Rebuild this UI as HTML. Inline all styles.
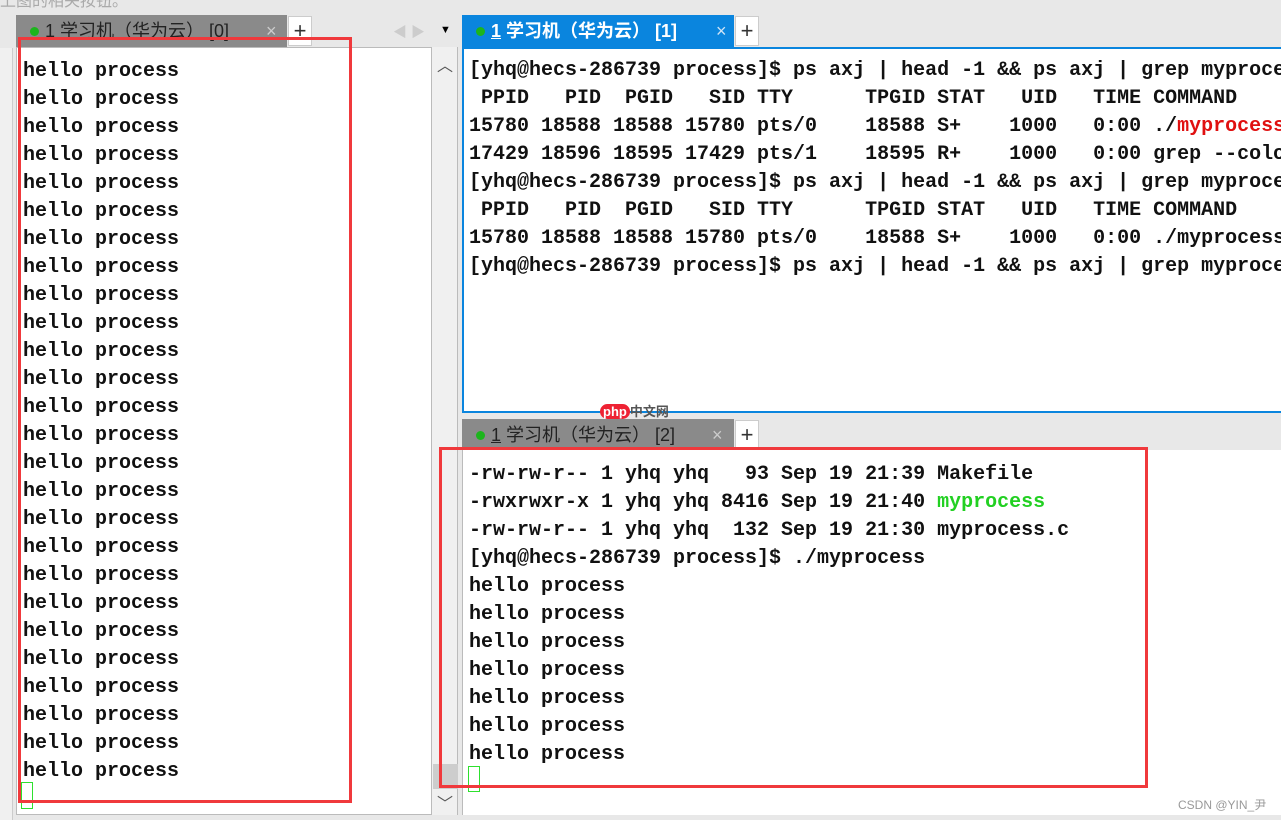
<!DOCTYPE html>
<html><head><meta charset="utf-8"><style>
*{margin:0;padding:0;box-sizing:border-box}
body{width:1281px;height:820px;background:#e8e8e8;position:relative;overflow:hidden;font-family:"Liberation Sans","Noto Sans CJK SC",sans-serif}
.abs{position:absolute}
.term{position:absolute;background:#fff;font-family:"Liberation Mono","DejaVu Sans Mono",monospace;font-size:20px;line-height:28px;color:#111;white-space:pre;overflow:hidden;font-weight:bold}
.tab{position:absolute;height:32px;font-size:18px;line-height:32px;color:#222;white-space:nowrap}
.dot{display:inline-block;width:9px;height:9px;border-radius:50%;background:#1cb51c;margin:0 6px 2px 0;vertical-align:middle}
.plus{position:absolute;width:24px;height:30px;background:#fff;border:1px solid #ccc;font-size:22px;line-height:27px;text-align:center;color:#333}
.red{position:absolute;border:3px solid #f0393c}
</style></head><body>
<div class="abs" style="left:0;top:0;width:300px;height:12px;overflow:hidden;color:#aaa;font-size:16px;line-height:4px">上图的相关按钮。</div>
<div class="abs" style="left:0;top:48px;width:13px;height:772px;background:#f0f0f0;border-right:1px solid #ccc"></div>
<div class="tab" style="left:16px;top:15px;width:271px;background:#8a8a8a;color:#222;padding-left:14px"><span class="dot"></span><u>1</u> 学习机（华为云） [0]<span style="position:absolute;left:250px;color:#ccc">×</span></div>
<div class="plus" style="left:288px;top:16px">+</div>
<div class="abs" style="left:393px;top:22px;color:#ccc;font-size:14px">◀ ▶</div>
<div class="abs" style="left:440px;top:24px;font-size:11px">▼</div>
<div class="term" style="left:16px;top:47px;width:416px;height:768px;padding:10px 0 0 6px;border:1px solid #bbb">hello process
hello process
hello process
hello process
hello process
hello process
hello process
hello process
hello process
hello process
hello process
hello process
hello process
hello process
hello process
hello process
hello process
hello process
hello process
hello process
hello process
hello process
hello process
hello process
hello process
hello process</div>
<div class="abs" style="left:21px;top:782px;width:12px;height:27px;border:1px solid #2ee02e"></div>
<div class="abs" style="left:432px;top:47px;width:26px;height:768px;background:#f0f0f0;border-right:1px solid #bbb"></div>
<div class="abs" style="left:437px;top:52px;font-size:16px;color:#555">︿</div>
<div class="abs" style="left:433px;top:764px;width:25px;height:25px;background:#cdcdcd"></div>
<div class="abs" style="left:437px;top:790px;font-size:16px;color:#555">﹀</div>
<div class="red" style="left:18px;top:37px;width:334px;height:766px"></div>
<div class="tab" style="left:462px;top:15px;width:272px;background:#0a85de;color:#fff;padding-left:14px;font-weight:bold"><span class="dot"></span><u>1</u> 学习机（华为云） [1]<span style="position:absolute;left:254px;color:#cfe4f6;font-weight:normal">×</span></div>
<div class="plus" style="left:735px;top:16px">+</div>
<div class="term" style="left:462px;top:47px;width:819px;height:366px;border:2px solid #0a85de;border-right:none;padding:8px 0 0 5px">[yhq@hecs-286739 process]$ ps axj | head -1 &amp;&amp; ps axj | grep myprocess
 PPID   PID  PGID   SID TTY      TPGID STAT   UID   TIME COMMAND
15780 18588 18588 15780 pts/0    18588 S+    1000   0:00 ./<span style="color:#e01010">myprocess</span>
17429 18596 18595 17429 pts/1    18595 R+    1000   0:00 grep --color
[yhq@hecs-286739 process]$ ps axj | head -1 &amp;&amp; ps axj | grep myprocess
 PPID   PID  PGID   SID TTY      TPGID STAT   UID   TIME COMMAND
15780 18588 18588 15780 pts/0    18588 S+    1000   0:00 ./myprocess
[yhq@hecs-286739 process]$ ps axj | head -1 &amp;&amp; ps axj | grep myprocess</div>
<div class="abs" style="left:600px;top:401px;font-size:13px;font-weight:bold"><span style="background:#e23;color:#fff;border-radius:8px;padding:0 3px">php</span><span style="color:#555">中文网</span></div>
<div class="tab" style="left:462px;top:419px;width:272px;background:#8a8a8a;padding-left:14px"><span class="dot"></span><u>1</u> 学习机（华为云） [2]<span style="position:absolute;left:250px;color:#ccc">×</span></div>
<div class="plus" style="left:735px;top:420px">+</div>
<div class="term" style="left:462px;top:450px;width:819px;height:365px;border-left:1px solid #bbb;padding:11px 0 0 6px">-rw-rw-r-- 1 yhq yhq   93 Sep 19 21:39 Makefile
-rwxrwxr-x 1 yhq yhq 8416 Sep 19 21:40 <span style="color:#22d022">myprocess</span>
-rw-rw-r-- 1 yhq yhq  132 Sep 19 21:30 myprocess.c
[yhq@hecs-286739 process]$ ./myprocess
hello process
hello process
hello process
hello process
hello process
hello process
hello process</div>
<div class="abs" style="left:468px;top:766px;width:12px;height:26px;border:1px solid #2ee02e"></div>
<div class="red" style="left:439px;top:447px;width:709px;height:341px"></div>
<div class="abs" style="left:1178px;top:796px;font-size:12px;color:#999">CSDN @YIN_尹</div>
</body></html>
